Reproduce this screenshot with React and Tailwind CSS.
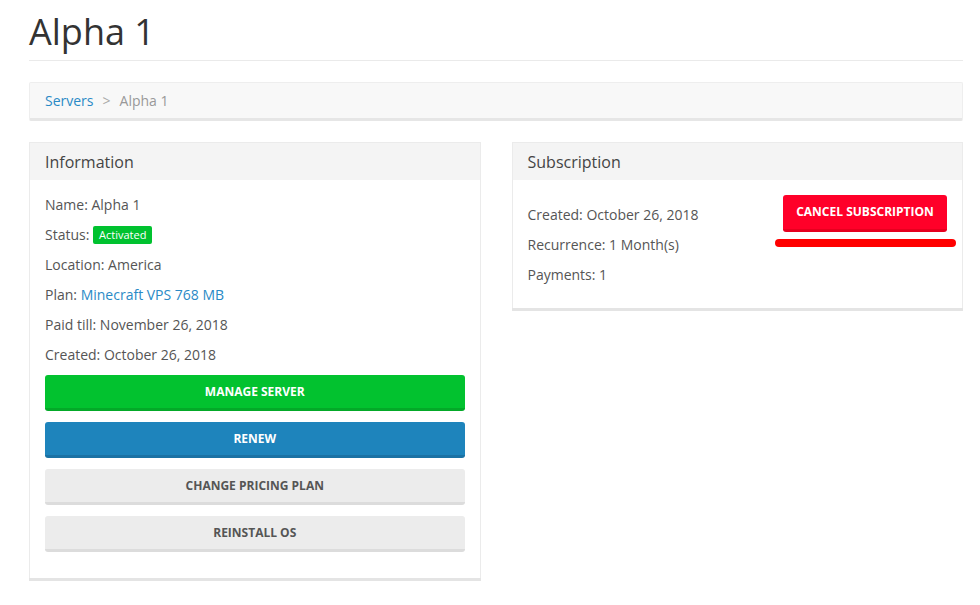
import React from 'react';

const font = { fontFamily: '"Open Sans", "Liberation Sans", sans-serif' };

const Panel = ({ title, children, className = '' }) => (
  <div className={`bg-white border border-[#ebebeb] border-b-0 shadow-[0_3px_0_#e4e4e4] ${className}`}>
    <div className="bg-[#f4f4f4] h-[37px] px-[15px] flex items-center text-[16px] text-[#444]">{title}</div>
    {children}
  </div>
);

const Line = ({ children }) => <p className="leading-5 mb-[10px]">{children}</p>;

const Btn = ({ color, children }) => (
  <button className={`w-full h-[36px] rounded-[3px] border-b-[3px] text-[12px] font-bold uppercase mb-[11px] ${color}`}>
    {children}
  </button>
);

export default function App() {
  return (
    <div style={font} className="bg-white min-h-[605px] pl-[29px] pr-[17px] text-[14px] text-[#555]">
      <h1 className="text-[36px] text-[#333] leading-none pt-[14px] pb-[10px] border-b border-[#eaeaea]">Alpha 1</h1>

      <div className="mt-[21px] h-[39px] bg-[#f8f8f8] border border-[#eeeeee] border-b-[3px] border-b-[#e6e6e6] rounded-[2px] px-[15px] flex items-center">
        <a className="text-[#2a8ac6]">Servers</a>
        <span className="text-[#aaa] mx-[9px]">&gt;</span>
        <span className="text-[#999]">Alpha 1</span>
      </div>

      <div className="mt-[21px] grid grid-cols-2 gap-[31px] items-start">
        <Panel title="Information">
          <div className="px-[15px] pt-[15px] pb-[15px]">
            <Line>Name: Alpha 1</Line>
            <Line>
              Status:{' '}
              <span className="inline-block bg-[#00c22f] text-white text-[11px] leading-[18px] px-[6px] rounded-[2px] align-[1px]">Activated</span>
            </Line>
            <Line>Location: America</Line>
            <Line>
              Plan: <a className="text-[#2a8ac6]">Minecraft VPS 768 MB</a>
            </Line>
            <Line>Paid till: November 26, 2018</Line>
            <Line>Created: October 26, 2018</Line>
            <Btn color="bg-[#02c22f] border-[#03a928] text-white">Manage Server</Btn>
            <Btn color="bg-[#1e84bc] border-[#1b72a4] text-white">Renew</Btn>
            <Btn color="bg-[#ececec] border-[#dcdcdc] text-[#555]">Change Pricing Plan</Btn>
            <Btn color="bg-[#ececec] border-[#dcdcdc] text-[#555]">Reinstall OS</Btn>
          </div>
        </Panel>

        <Panel title="Subscription">
          <div className="px-[15px] pt-[15px] pb-[13px] flex justify-between">
            <div className="pt-[10px]">
              <Line>Created: October 26, 2018</Line>
              <Line>Recurrence: 1 Month(s)</Line>
              <Line>Payments: 1</Line>
            </div>
            <div className="relative">
              <button className="h-[37px] w-[164px] bg-[#ff0029] border-b-[3px] border-[#e6001f] rounded-[3px] text-white text-[12px] font-bold uppercase">
                Cancel Subscription
              </button>
              <div className="absolute left-[-8px] top-[44px] w-[181px] h-[8px] rounded-full bg-[#ff0000]" />
            </div>
          </div>
        </Panel>
      </div>
    </div>
  );
}
